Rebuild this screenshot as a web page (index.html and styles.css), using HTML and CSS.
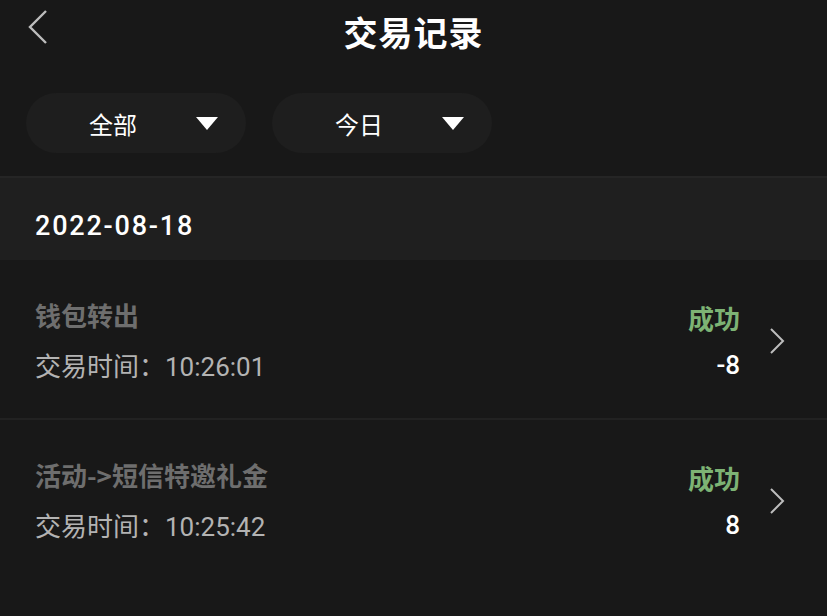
FILE: index.html
```html
<!DOCTYPE html>
<html lang="zh-CN">
<head>
  <meta charset="UTF-8">
  <title>交易记录</title>
  <link rel="stylesheet" href="styles.css">
</head>

<body>

  <!-- Top bar -->
  <div class="topbar">
    <svg class="back" width="22" height="36" viewBox="0 0 22 36">
      <path d="M19 2 L3 18 L19 34" fill="none" stroke="#bdbdbd" stroke-width="2.4"/>
    </svg>
    <h1>交易记录</h1>
  </div>

  <!-- Filters -->
  <div class="filters">
    <div class="pill">
      <span>全部</span>
      <i class="caret"></i>
    </div>
    <div class="pill">
      <span>今日</span>
      <i class="caret"></i>
    </div>
  </div>

  <div class="date-band">2022-08-18</div>

  <!-- Records -->
  <div class="record">
    <div class="info">
      <div class="name">钱包转出</div>
      <div class="time">交易时间：10:26:01</div>
    </div>
    <div class="result">
      <div class="status">成功</div>
      <div class="amount">-8</div>
    </div>
    <svg class="arrow" width="16" height="28" viewBox="0 0 16 28">
      <path d="M2 2 L14 14 L2 26" fill="none" stroke="#bdbdbd" stroke-width="2"/>
    </svg>
  </div>

  <div class="record">
    <div class="info">
      <div class="name">活动-&gt;短信特邀礼金</div>
      <div class="time">交易时间：10:25:42</div>
    </div>
    <div class="result">
      <div class="status">成功</div>
      <div class="amount">8</div>
    </div>
    <svg class="arrow" width="16" height="28" viewBox="0 0 16 28">
      <path d="M2 2 L14 14 L2 26" fill="none" stroke="#bdbdbd" stroke-width="2"/>
    </svg>
  </div>

</body>
</html>
```

FILE: styles.css
```css
body {
  margin: 0;
  background: #181818;
  color: #fff;
  font-family: Roboto, "Noto Sans CJK SC", sans-serif;
}

.topbar {
  position: relative;
  height: 60px;
  display: flex;
  align-items: center;
  justify-content: center;
}

.topbar h1 {
  margin: 0;
  font-size: 34px;
  font-weight: bold;
  font-family: "Noto Sans CJK SC", sans-serif;
  letter-spacing: 1px;
  padding-top: 2px;
}

.back {
  position: absolute;
  left: 27px;
  top: 9px;
}

.filters {
  display: flex;
  gap: 26px;
  padding: 33px 26px 23px;
  border-bottom: 2px solid #252525;
}

.pill {
  width: 220px;
  height: 60px;
  border-radius: 30px;
  background: #1e1e1e;
  display: flex;
  align-items: center;
  font-family: "Noto Sans CJK SC", sans-serif;
  font-size: 24px;
}

.pill span {
  margin-left: 63px;
}

.caret {
  margin-left: 59px;
  width: 0;
  height: 0;
  border-left: 11px solid transparent;
  border-right: 11px solid transparent;
  border-top: 13px solid #fff;
}

.date-band {
  background: #1f1f1f;
  height: 82px;
  padding: 14px 0 0 35px;
  box-sizing: border-box;
  display: flex;
  align-items: center;
  font-size: 27px;
  font-weight: 500;
  letter-spacing: 1.8px;
}

.record {
  display: flex;
  align-items: center;
  padding: 38px 42px 34px 35px;
  border-bottom: 2px solid #222;
}

.record:last-child {
  border-bottom: none;
}

.info {
  flex: 1;
}

.name {
  font-family: "Noto Sans CJK SC", sans-serif;
  font-size: 26px;
  font-weight: bold;
  color: #6e6e6e;
  line-height: 34px;
}

.time {
  margin-top: 18px;
  font-size: 26px;
  color: #b3b3b3;
  line-height: 34px;
}

.result {
  text-align: right;
}

.status {
  font-family: "Noto Sans CJK SC", sans-serif;
  font-size: 26px;
  font-weight: bold;
  color: #7db374;
  line-height: 34px;
}

.amount {
  margin-top: 13px;
  font-size: 26px;
  font-weight: 500;
  line-height: 34px;
}

.arrow {
  margin-left: 29px;
  margin-top: 0;
}
```
